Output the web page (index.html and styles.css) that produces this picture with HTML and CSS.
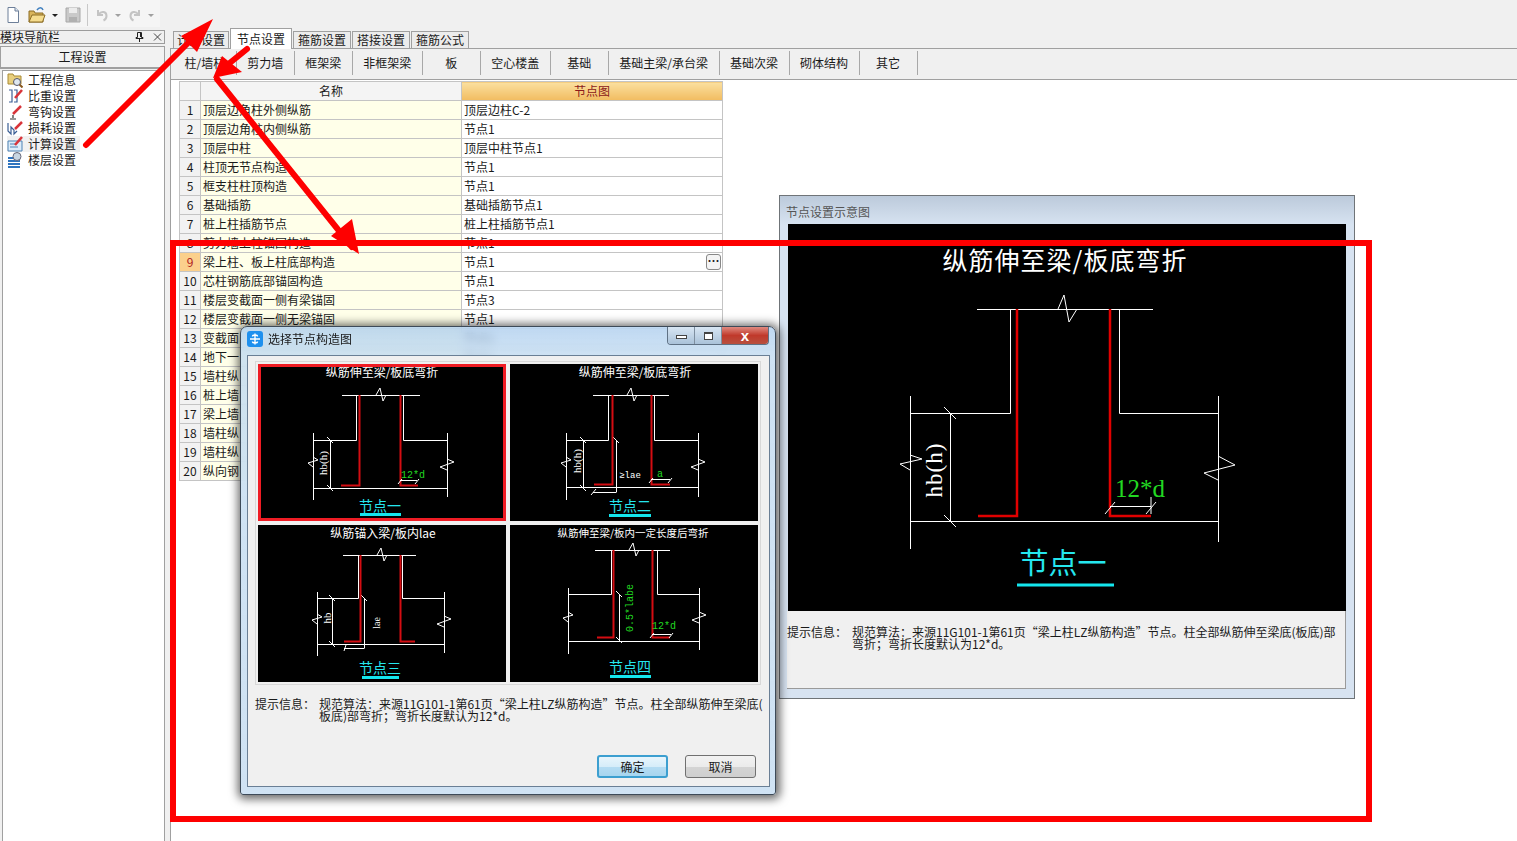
FILE: index.html
```html
<!DOCTYPE html>
<html lang="zh-CN">
<head>
<meta charset="utf-8">
<title>节点设置</title>
<link rel="stylesheet" href="styles.css">
</head>
<body>
<div class="app">
  <div class="toolbar">
    <div class="tool-group">
      <svg class="ti" viewBox="0 0 16 18"><path d="M3 1.500h7l3.500 3.500v11.500h-10.500z" fill="#fff" stroke="#6d7f99"/><path d="M10 1.500v3.500h3.500" fill="#dfe8f3" stroke="#6d7f99"/></svg>
      <svg class="ti ti-open" viewBox="0 0 18 18"><path d="M1 5h5l1 2h8v9h-14z" fill="#d9b45a" stroke="#8c6d24"/><path d="M1 16l3-7h13l-2.500 7z" fill="#f5dc8e" stroke="#8c6d24"/><path d="M9 4c2-3 5-3 6 0" fill="none" stroke="#3f7fbf" stroke-width="1.500"/></svg>
      <span class="caret dark"></span>
      <svg class="ti ti-save" viewBox="0 0 16 16"><path d="M1 1h14v14h-14z" fill="#c9c9c9" stroke="#a8a8a8"/><path d="M4 1h8v5h-8z" fill="#ececec"/><path d="M4 10h8v5h-8z" fill="#b0b0b0"/></svg>
      <span class="tool-sep"></span>
      <svg class="ti ti-undo" viewBox="0 0 16 16"><path d="M4 3v5h5M4.500 7.500c3-4 8-3 8 1.500 0 2-1 3.500-3 4.500" fill="none" stroke="#c4c4c4" stroke-width="2"/></svg>
      <span class="caret"></span>
      <svg class="ti ti-redo" viewBox="0 0 16 16"><path d="M12 3v5h-5M11.500 7.500c-3-4-8-3-8 1.500 0 2 1 3.500 3 4.500" fill="none" stroke="#c4c4c4" stroke-width="2"/></svg>
      <span class="caret"></span>
    </div>
  </div>
  <div class="workspace">
    <aside class="sidebar">
      <div class="side-title"><span>模块导航栏</span><span class="side-ctl"><svg class="pin" viewBox="0 0 9 10"><path d="M2.500 0.500h4v5h1.500v1h-7v-1h1.500zM4.500 6.500v3.500M5.500 1v4" fill="none" stroke="#222"/></svg><svg class="pin" viewBox="0 0 9 10"><path d="M1 1.500l7 7M8 1.500l-7 7" fill="none" stroke="#444"/></svg></span></div>
      <div class="side-head">工程设置</div>
      <ul class="side-list">
        <li><svg class="si" viewBox="0 0 16 16"><path d="M1 2h5l1 2h7v8h-13z" fill="#e8cf7e" stroke="#a98a33"/><circle cx="10" cy="10" r="3.500" fill="#dfe8f0" stroke="#556"/><path d="M12.500 12.500l3 3" stroke="#8a5a20" stroke-width="2"/></svg>工程信息</li>
        <li><svg class="si" viewBox="0 0 16 16"><path d="M2 2h3v12h-3M7 2h3v12h-3" fill="none" stroke="#3b5f95" stroke-width="1.200"/><path d="M8 10l7-8" stroke="#d8343a" stroke-width="2.500"/></svg>比重设置</li>
        <li><svg class="si" viewBox="0 0 16 16"><path d="M6 10l8-8" stroke="#d8343a" stroke-width="2.500"/><path d="M6 11v3M3 15h6" stroke="#333" stroke-width="1.200"/></svg>弯钩设置</li>
        <li><svg class="si" viewBox="0 0 16 16"><path d="M1 3v8l3 3v-7l3 3v4l3-3" fill="none" stroke="#3b5f95" stroke-width="1.200"/><path d="M8 9l7-7" stroke="#d8343a" stroke-width="2.500"/></svg>损耗设置</li>
        <li class="is-hot"><svg class="si" viewBox="0 0 16 16"><path d="M1 5h14v10h-14z" fill="#dcecf9" stroke="#4f83b5"/><path d="M3 8h6M3 11h8" stroke="#4f83b5"/><path d="M8 9l7-8" stroke="#d8343a" stroke-width="2.500"/></svg>计算设置</li>
        <li><svg class="si" viewBox="0 0 16 16"><path d="M1 6h12M1 9h12M1 12h12M1 15h12" stroke="#2f74bf" stroke-width="2"/><circle cx="10" cy="4.500" r="4" fill="#c9d6e2" stroke="#667"/></svg>楼层设置</li>
      </ul>
    </aside>
    <main class="main">
      <div class="tabs">
        <span class="tab tab-first">计算设置</span>
        <span class="tab is-active">节点设置</span>
        <span class="tab">箍筋设置</span>
        <span class="tab">搭接设置</span>
        <span class="tab">箍筋公式</span>
      </div>
      <div class="subtabs">
        <span class="subtab">柱/墙柱</span><span class="subtab">剪力墙</span><span class="subtab">框架梁</span><span class="subtab">非框架梁</span><span class="subtab">板</span><span class="subtab">空心楼盖</span><span class="subtab">基础</span><span class="subtab">基础主梁/承台梁</span><span class="subtab">基础次梁</span><span class="subtab">砌体结构</span><span class="subtab">其它</span>
      </div>
      <div class="sheet">
        <table class="grid">
          <thead><tr><th class="c-no"></th><th class="c-name">名称</th><th class="c-val">节点图</th></tr></thead>
          <tbody>
            <tr><td class="no">1</td><td class="name">顶层边角柱外侧纵筋</td><td>顶层边柱C-2</td></tr>
            <tr><td class="no">2</td><td class="name">顶层边角柱内侧纵筋</td><td>节点1</td></tr>
            <tr><td class="no">3</td><td class="name">顶层中柱</td><td>顶层中柱节点1</td></tr>
            <tr><td class="no">4</td><td class="name">柱顶无节点构造</td><td>节点1</td></tr>
            <tr><td class="no">5</td><td class="name">框支柱柱顶构造</td><td>节点1</td></tr>
            <tr><td class="no">6</td><td class="name">基础插筋</td><td>基础插筋节点1</td></tr>
            <tr><td class="no">7</td><td class="name">桩上柱插筋节点</td><td>桩上柱插筋节点1</td></tr>
            <tr><td class="no">8</td><td class="name">剪力墙上柱锚固构造</td><td>节点1</td></tr>
            <tr><td class="no is-cur">9</td><td class="name">梁上柱、板上柱底部构造</td><td class="has-btn">节点1<span class="more">…</span></td></tr>
            <tr><td class="no">10</td><td class="name">芯柱钢筋底部锚固构造</td><td>节点1</td></tr>
            <tr><td class="no">11</td><td class="name">楼层变截面一侧有梁锚固</td><td>节点3</td></tr>
            <tr><td class="no">12</td><td class="name">楼层变截面一侧无梁锚固</td><td>节点1</td></tr>
            <tr><td class="no">13</td><td class="name">变截面</td><td>节点1</td></tr>
            <tr><td class="no">14</td><td class="name">地下一</td><td>节点1</td></tr>
            <tr><td class="no">15</td><td class="name">墙柱纵</td><td></td></tr>
            <tr><td class="no">16</td><td class="name">桩上墙</td><td></td></tr>
            <tr><td class="no">17</td><td class="name">梁上墙</td><td></td></tr>
            <tr><td class="no">18</td><td class="name">墙柱纵</td><td></td></tr>
            <tr><td class="no">19</td><td class="name">墙柱纵</td><td></td></tr>
            <tr><td class="no">20</td><td class="name">纵向钢</td><td></td></tr>
          </tbody>
        </table>
      </div>
    </main>
  </div>

  <section class="preview">
    <div class="preview-title">节点设置示意图</div>
    <svg class="preview-canvas" viewBox="788 224 558 387">
      <text class="t-white" x="1065" y="270" font-size="25" letter-spacing="1">纵筋伸至梁/板底弯折</text>
      <path class="w" d="M977 309.500H1153M1010.500 309.500V413.500H910.500M1119.500 309.500V413.500H1218.500M910.500 396V549M1218.500 396V542M910.500 521.500H1218.500M950.500 413V521M944 407l12 12M944 515l12 12"/>
      <path class="w" d="M1058 309L1064 295L1069 322L1077 309M910 455L922 459L900 464L910 470M1218 456L1235 465L1204 473L1218 480"/>
      <path class="r big" d="M978 516H1017V309M1110 309V516H1151"/>
      <path class="w" d="M1110 506.500H1151M1105 514l10-12M1146 514l10-12M1151 497v17"/>
      <text class="t-green" x="1140" y="497" font-size="25">12*d</text>
      <text class="t-white t-serif" transform="translate(942 470) rotate(-90)" font-size="23" letter-spacing="1">hb(h)</text>
      <text class="t-cyan" x="1063" y="574" font-size="29">节点一</text>
      <path class="u big" d="M1017 585H1114"/>
    </svg>
    <div class="info preview-info"><span class="info-label">提示信息：</span><span>规范算法：来源11G101-1第61页“梁上柱LZ纵筋构造”节点。柱全部纵筋伸至梁底(板底)部<br>弯折；弯折长度默认为12*d。</span></div>
  </section>

  <svg class="marks" viewBox="0 0 1517 841">
    <path class="mark-frame" d="M173 243H1369V819H173z"/>
    <path class="mark-line" d="M86 145L195 36M247 49L226 66M217 79L352 247"/>
    <path class="mark-head" d="M213 19L181 36L197 52zM213 78L222 56L242 72zM359 254L331 236L352 219z"/>
  </svg>

  <section class="dialog">
    <div class="dlg-title">
      <svg class="dlg-icon" viewBox="0 0 16 16"><rect width="16" height="16" rx="3" fill="#1e90ee"/><path d="M8 2.500v11M3 8h10M5.500 5.500c0-2 5-2 5 0M5.500 10.500c0 2 5 2 5 0" fill="none" stroke="#fff" stroke-width="1.400"/></svg>
      <span>选择节点构造图</span>
      <div class="win-btns">
        <span class="win-btn"><i class="g-min"></i></span><span class="win-btn"><i class="g-max"></i></span><span class="win-btn win-close">x</span>
      </div>
    </div>
    <div class="dlg-body">
      <div class="thumbs">
        <svg class="thumb is-selected" viewBox="258 364 248 157">
          <text class="t-white" x="382" y="377" font-size="12">纵筋伸至梁/板底弯折</text>
          <path class="w" d="M342 395.500H420M356.500 395.500V440.500H313.500M403.500 395.500V440.500H447.500M313.500 433V500M447.500 433V497M313.500 488.500H447.500M330.500 440V488M327 437l6 6M327 485l6 6"/>
          <path class="w" d="M376 395L380 388L383 401L386 395M313 457L318 460L308 463L313 467M447 459L454 462L440 467L447 470"/>
          <path class="r" d="M341 485.500H359.500V395M400.500 395V485.500H418"/>
          <path class="w" d="M400 480.500H417M398 484l4-5M415 484l4-5"/>
          <text class="t-green t-mono" x="413" y="478" font-size="10">12*d</text>
          <text class="t-white t-serif" transform="translate(327 463) rotate(-90)" font-size="11">hb(h)</text>
          <text class="t-cyan" x="380" y="511" font-size="14">节点一</text>
          <path class="u" d="M360 514.500H401"/>
        </svg>
        <svg class="thumb" viewBox="510 364 248 157">
          <text class="t-white" x="635" y="377" font-size="12">纵筋伸至梁/板底弯折</text>
          <path class="w" d="M593 395.500H669M608.500 395.500V440.500H566.500M654.500 395.500V440.500H698.500M566.500 433V500M698.500 433V497M566.500 487.500H698.500M583.500 440V488M580 437l6 6M580 485l6 6M616.500 440V492M593 492.500H616.500M613 437l6 6M591 495l5-6"/>
          <path class="w" d="M627 395L631 388L634 401L637 395M566 457L571 460L561 463L566 467M698 459L705 462L691 467L698 470"/>
          <path class="r" d="M594 484.500H612.500V395M651.500 395V484.500H670"/>
          <path class="w" d="M651 479.500H670M649 483l4-5M668 483l4-5"/>
          <text class="t-white t-mono" x="630" y="478" font-size="9">≥lae</text>
          <text class="t-green t-mono" x="660" y="477" font-size="10">a</text>
          <text class="t-white t-serif" transform="translate(581 461) rotate(-90)" font-size="11">hb(h)</text>
          <text class="t-cyan" x="630" y="511" font-size="14">节点二</text>
          <path class="u" d="M609 515.500H651"/>
        </svg>
        <svg class="thumb" viewBox="258 525 248 157">
          <text class="t-white" x="383" y="538" font-size="12">纵筋锚入梁/板内lae</text>
          <path class="w" d="M343 555.500H416M358.500 555.500V598.500H317.500M402.500 555.500V598.500H444.500M317.500 592V656M444.500 592V653M317.500 644.500H444.500M332.500 598V644M329 595l6 6M329 641l6 6M364.500 598V648M344 648.500H364.500M361 595l6 6M344 651l2-6"/>
          <path class="w" d="M377 555L381 548L384 561L387 555M317 614L322 617L312 620L317 624M444 616L451 619L437 624L444 627"/>
          <path class="r" d="M344 641.500H360.500V555M400.500 555V641.500H415"/>
          <text class="t-white t-serif" transform="translate(331 618) rotate(-90)" font-size="11">hb</text>
          <text class="t-white t-serif" transform="translate(380 623) rotate(-90)" font-size="10">lae</text>
          <text class="t-cyan" x="380" y="673" font-size="14">节点三</text>
          <path class="u" d="M362 677.500H399"/>
        </svg>
        <svg class="thumb" viewBox="510 525 248 157">
          <text class="t-white" x="633" y="537" font-size="10.500">纵筋伸至梁/板内一定长度后弯折</text>
          <path class="w" d="M595 550.500H670M611.500 550.500V594.500H568.500M657.500 550.500V594.500H699.500M568.500 588V654M699.500 588V650M568.500 641.500H699.500M619.500 594V640M616 591l6 6M616 637l6 6"/>
          <path class="w" d="M629 550L633 543L636 556L639 550M568 612L573 615L563 618L568 622M699 612L706 615L692 620L699 623"/>
          <path class="r" d="M597 637.500H613.500V550M652.500 550V637.500H670"/>
          <path class="w" d="M652 634.500H671M650 638l4-5M669 638l4-5"/>
          <text class="t-green t-mono" transform="translate(633 608) rotate(-90)" font-size="10">0.5*labe</text>
          <text class="t-green t-mono" x="664" y="629" font-size="10">12*d</text>
          <text class="t-cyan" x="630" y="672" font-size="14">节点四</text>
          <path class="u" d="M610 676.500H651"/>
        </svg>
      </div>
      <div class="info dlg-info"><span class="info-label">提示信息：</span><span>规范算法：来源11G101-1第61页“梁上柱LZ纵筋构造”节点。柱全部纵筋伸至梁底(<br>板底)部弯折；弯折长度默认为12*d。</span></div>
      <div class="dlg-foot">
        <button class="btn btn-default" type="button">确定</button>
        <button class="btn" type="button">取消</button>
      </div>
    </div>
  </section>
</div>
</body>
</html>
```

FILE: styles.css
```css
* { box-sizing: border-box; }
html, body { margin: 0; padding: 0; height: 100%; overflow: hidden; }
body { font: 12px/12px "Noto Sans CJK SC", "Liberation Sans", sans-serif; color: #1a1a1a; background: #f0f0f0; }
svg { display: block; }

.app { position: relative; display: flex; flex-direction: column; width: 1517px; height: 841px; overflow: hidden; }

.toolbar { height: 30px; flex: none; }
.tool-group { display: flex; align-items: center; width: 160px; height: 27px; padding: 3px 0 0 5px; background: #f5f5f5; }
.ti { width: 16px; height: 18px; flex: none; }
.ti-open { margin-left: 7px; width: 18px; }
.ti-save { margin-left: 7px; }
.ti-undo { margin-left: 6px; }
.ti-redo { margin-left: 6px; }
.caret { width: 0; height: 0; margin-left: 5px; border: 3px solid transparent; border-top: 3px solid #a0a0a0; border-bottom: 0; flex: none; }
.caret.dark { border-top-color: #222; margin-left: 6px; }
.tool-sep { width: 1px; height: 22px; margin-left: 6px; background: #c8c8c8; flex: none; }

.workspace { display: flex; flex: 1; min-height: 0; }

.sidebar { display: flex; flex-direction: column; width: 165px; flex: none; }
.side-title { display: flex; justify-content: space-between; align-items: center; height: 14px; padding: 0 2px 0 0; border: 1px solid #9c9c9c; border-left: 0; }
.side-ctl { display: flex; gap: 9px; }
.pin { width: 9px; height: 10px; }
.side-head { display: flex; align-items: center; justify-content: center; height: 23px; margin-top: 2px; border: 1px solid #a0a0a0; border-bottom: 2px solid #a0a0a0; background: #f2f2f2; }
.side-list { flex: 1; margin: 1px 0 0 2px; padding: 1px 0 0 4px; list-style: none; background: #fff; border: 1px solid #a0a0a0; border-bottom: 0; }
.side-list li { display: flex; align-items: center; height: 16px; gap: 5px; }
.si { width: 16px; height: 16px; flex: none; }
.is-hot { width: 73px; background: #f1f1f1; }

.main { display: flex; flex-direction: column; flex: 1; margin-left: 5px; min-width: 0; }
.tabs { display: flex; align-items: flex-end; height: 20px; padding-left: 3px; margin-top: -1px; gap: 1px; border-bottom: 1px solid #a0a0a0; }
.tab { display: flex; align-items: center; justify-content: center; width: 58px; height: 17px; border: 1px solid #a0a0a0; border-bottom: 0; background: #ececec; }
.tab-first { width: 56px; }
.is-active { position: relative; top: 1px; width: 62px; height: 21px; background: #fff; }
.subtabs { display: flex; align-items: center; height: 31px; padding: 0 0 3px 3px; background: #f0f0f0; border-left: 1px solid #a0a0a0; border-bottom: 1px solid #a0a0a0; }
.subtab { display: flex; align-items: center; justify-content: center; min-width: 58px; height: 24px; padding: 0 10.500px; border-right: 1px solid #a8a8a8; }
.sheet { flex: 1; padding: 1px 0 0 8px; background: #fff; border-left: 1px solid #a0a0a0; }

.grid { width: 544px; table-layout: fixed; border-collapse: collapse; }
.grid th, .grid td { height: 19px; padding: 0 0 0 2px; border: 1px solid #c4c4c4; font-weight: 400; white-space: nowrap; overflow: hidden; }
.grid th { padding: 0; text-align: center; background: #f4f4f4; }
.c-no { width: 21px; }
.c-name { width: 261px; }
.grid .c-val { background: linear-gradient(#fbe0a0, #f2bc60); color: #8b1a1a; }
.grid .no { padding: 0; text-align: center; background: #f2f2f2; }
.grid .is-cur { background: #fbd08c; color: #b02020; }
.grid .name { background: #ffffe9; }
.has-btn { position: relative; }
.more { position: absolute; right: 1px; top: 1px; width: 15px; height: 16px; border: 1px solid #888; border-radius: 3px; background: #f4f4f4; font-size: 12px; line-height: 11px; font-weight: 700; text-align: center; }

.preview { position: absolute; left: 779px; top: 195px; display: flex; flex-direction: column; width: 576px; height: 504px; padding: 0 8px 9px 8px; border: 1px solid #6f7478; background: linear-gradient(#bccadb 0, #d7e3f1 29px, #d7e3f1 100%); }
.preview-title { display: flex; align-items: center; height: 28px; flex: none; padding-top: 4px; margin-left: -2px; color: #555; }
.preview-canvas { width: 558px; height: 387px; flex: none; background: #000; }
.preview-info { flex: 1; margin-left: -1px; width: 559px; padding: 15px 0 0 0; background: #f0f0f0; border-bottom: 1px solid #9a9a9a; border-right: 1px solid #9a9a9a; }

.info { display: flex; white-space: nowrap; }
.info-label { width: 65px; flex: none; }

.w { fill: none; stroke: #fff; stroke-width: 1; }
.r { fill: none; stroke: #d40d12; stroke-width: 2; }
.r.big { stroke: #e00000; stroke-width: 2.500; }
.u { fill: none; stroke: #14e6ee; stroke-width: 3; }
.t-white { fill: #fff; text-anchor: middle; }
.t-serif { font-family: "Liberation Serif", serif; }
.t-green { fill: #22d822; text-anchor: middle; font-family: "Liberation Serif", serif; }
.t-mono { font-family: "Liberation Mono", monospace; }
.t-cyan { fill: #25e6ee; text-anchor: middle; }

.marks { position: absolute; left: 0; top: 0; width: 1517px; height: 841px; pointer-events: none; }
.mark-frame { fill: none; stroke: #fe0000; stroke-width: 6; }
.mark-line { fill: none; stroke: #fe0000; stroke-width: 6; stroke-linecap: round; }
.mark-head { fill: #fe0000; }

.dialog { position: absolute; left: 240px; top: 326px; display: flex; flex-direction: column; width: 536px; height: 469px; border: 1px solid #3d4a58; border-radius: 7px 7px 3px 3px; background: linear-gradient(rgba(168, 203, 238, .72), rgba(196, 220, 240, .82) 30px, rgba(205, 225, 243, .95) 100%); -webkit-backdrop-filter: blur(4px); backdrop-filter: blur(4px); box-shadow: 1px 1px 10px 3px rgba(0, 0, 0, .6); }
.dlg-title { position: relative; display: flex; align-items: center; gap: 5px; height: 28px; flex: none; padding: 0 0 5px 6px; }
.dlg-icon { width: 16px; height: 16px; }
.win-btns { position: absolute; right: 6px; top: 0; display: flex; height: 18px; border: 1px solid #5f7184; border-top: 0; border-radius: 0 0 4px 4px; overflow: hidden; }
.win-btn { display: flex; align-items: center; justify-content: center; width: 27px; height: 17px; border-right: 1px solid #7e8fa0; background: linear-gradient(#d8e6f3, #aac2d9); }
.g-min { display: block; width: 11px; height: 4px; margin-top: 3px; border: 1px solid #444; background: #fff; }
.g-max { display: block; width: 9px; height: 8px; border: 1px solid #444; border-top-width: 2px; background: #fff; }
.win-close { width: 46px; border-right: 0; background: linear-gradient(#e08a80, #c0392b 50%, #b8503f); color: #fff; font: 700 15px/15px "Liberation Sans", sans-serif; }
.dlg-body { display: flex; flex-direction: column; flex: 1; margin: 0 5px 7px 6px; padding: 5px 7px 8px; background: #f0f0f0; border: 1px solid #6a7f95; }
.thumbs { display: grid; grid-template-columns: 248px 248px; gap: 4px; width: 506px; padding: 2px; border: 1px solid #d8d8d8; }
.thumb { width: 248px; height: 157px; background: #000; }
.is-selected { outline: 3px solid #ef1c24; outline-offset: -3px; }
.dlg-info { margin-top: 13px; }
.dlg-info .info-label { width: 64px; }
.dlg-foot { display: flex; justify-content: flex-end; gap: 17px; margin-top: auto; padding-right: 6px; }
.btn { width: 71px; height: 23px; padding: 0; border: 1px solid #707070; border-radius: 3px; background: linear-gradient(#f2f2f2 0, #ebebeb 50%, #d4d4d4 52%, #cfcfcf 100%); color: #1a1a1a; font: inherit; }
.btn-default { border: 2px solid #3c9fd0; background: linear-gradient(#e8f5fc 0, #d6edf9 50%, #b4dcf3 52%, #a7d5ee 100%); }
```
